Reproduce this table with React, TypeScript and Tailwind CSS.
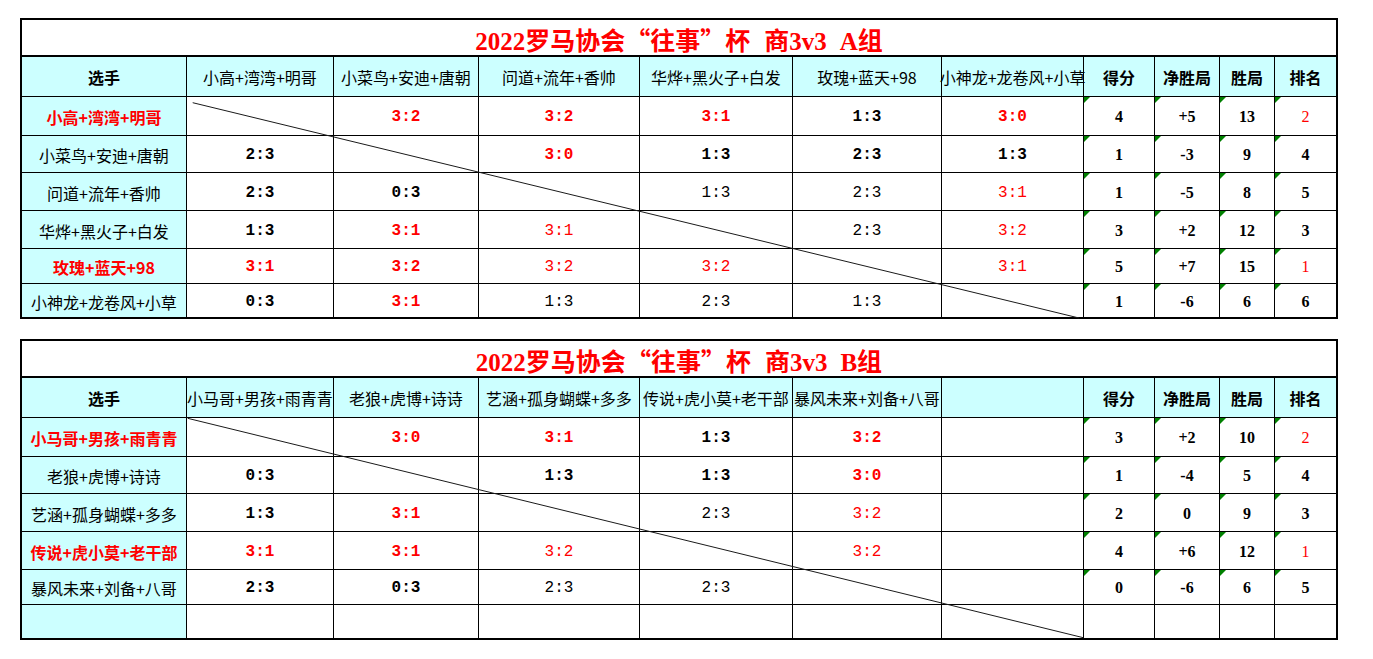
import React from "react";

type Score = { t: string; r?: boolean };
type Row = {
  name: string;
  red?: boolean;
  scores: Score[];
  stats: string[];
  rankRed?: boolean;
};

const GRID =
  "grid grid-cols-[165px_147px_145px_161px_153px_149px_142px_71px_65px_55px_61px]";
const ROW_H = ["h-[39px]", "h-[37px]", "h-[38px]", "h-[38px]", "h-[35px]", "h-[33px]"];

const CJK = "font-['Noto_Sans_CJK_SC',sans-serif]";
const MONO = "font-['Liberation_Mono','Noto_Sans_CJK_SC',monospace]";
const SERIF = "font-['Liberation_Serif','Noto_Sans_CJK_SC',serif]";

const s = (t: string, r?: boolean): Score => ({ t, r });

const tableA: { group: string; headers: string[]; rows: Row[]; line: [number, number, number, number] } = {
  group: "A",
  headers: [
    "小高+湾湾+明哥",
    "小菜鸟+安迪+唐朝",
    "问道+流年+香帅",
    "华烨+黑火子+白发",
    "玫瑰+蓝天+98",
    "小神龙+龙卷风+小草",
  ],
  rows: [
    { name: "小高+湾湾+明哥", red: true, scores: [s(""), s("3:2", true), s("3:2", true), s("3:1", true), s("1:3"), s("3:0", true)], stats: ["4", "+5", "13", "2"], rankRed: true },
    { name: "小菜鸟+安迪+唐朝", scores: [s("2:3"), s(""), s("3:0", true), s("1:3"), s("2:3"), s("1:3")], stats: ["1", "-3", "9", "4"] },
    { name: "问道+流年+香帅", scores: [s("2:3"), s("0:3"), s(""), s("1:3"), s("2:3"), s("3:1", true)], stats: ["1", "-5", "8", "5"] },
    { name: "华烨+黑火子+白发", scores: [s("1:3"), s("3:1", true), s("3:1", true), s(""), s("2:3"), s("3:2", true)], stats: ["3", "+2", "12", "3"] },
    { name: "玫瑰+蓝天+98", red: true, scores: [s("3:1", true), s("3:2", true), s("3:2", true), s("3:2", true), s(""), s("3:1", true)], stats: ["5", "+7", "15", "1"], rankRed: true },
    { name: "小神龙+龙卷风+小草", scores: [s("0:3"), s("3:1", true), s("1:3"), s("2:3"), s("1:3"), s("")], stats: ["1", "-6", "6", "6"] },
  ],
  line: [170.7, 82.7, 1057, 298],
};

const tableB: typeof tableA = {
  group: "B",
  headers: [
    "小马哥+男孩+雨青青",
    "老狼+虎博+诗诗",
    "艺涵+孤身蝴蝶+多多",
    "传说+虎小莫+老干部",
    "暴风未来+刘备+八哥",
    "",
  ],
  rows: [
    { name: "小马哥+男孩+雨青青", red: true, scores: [s(""), s("3:0", true), s("3:1", true), s("1:3"), s("3:2", true), s("")], stats: ["3", "+2", "10", "2"], rankRed: true },
    { name: "老狼+虎博+诗诗", scores: [s("0:3"), s(""), s("1:3"), s("1:3"), s("3:0", true), s("")], stats: ["1", "-4", "5", "4"] },
    { name: "艺涵+孤身蝴蝶+多多", scores: [s("1:3"), s("3:1", true), s(""), s("2:3"), s("3:2", true), s("")], stats: ["2", "0", "9", "3"] },
    { name: "传说+虎小莫+老干部", red: true, scores: [s("3:1", true), s("3:1", true), s("3:2", true), s(""), s("3:2", true), s("")], stats: ["4", "+6", "12", "1"], rankRed: true },
    { name: "暴风未来+刘备+八哥", scores: [s("2:3"), s("0:3"), s("2:3"), s("2:3"), s(""), s("")], stats: ["0", "-6", "6", "5"] },
    { name: "", scores: [s(""), s(""), s(""), s(""), s(""), s("")], stats: ["", "", "", ""] },
  ],
  line: [165.7, 77.3, 1061.3, 296.7],
};

function Title({ group }: { group: string }) {
  return (
    <div className="h-[37px] border-b-2 border-black flex items-center justify-center pt-[6px]">
      <div className={`flex items-baseline text-[#ff0000] text-[25px] leading-none font-bold whitespace-nowrap ${SERIF}`}>
        <span>2022</span>
        <span className={CJK}>罗马协会</span>
        <span className={`${CJK} inline-block w-[25px] text-right`}>“</span>
        <span className={CJK}>往事</span>
        <span className={`${CJK} inline-block w-[25px] text-left`}>”</span>
        <span className={CJK}>杯</span>
        <span className="inline-block w-[14px]"> </span>
        <span className={CJK}>商</span>
        <span>3v3</span>
        <span className="inline-block w-[13px]"> </span>
        <span>{group}</span>
        <span className={CJK}>组</span>
      </div>
    </div>
  );
}

function Tri() {
  return (
    <div className="absolute left-0 top-0 w-0 h-0 border-t-[6px] border-t-[#008000] border-r-[6px] border-r-transparent" />
  );
}

function Table({ data }: { data: typeof tableA }) {
  const [x1, y1, x2, y2] = data.line;
  return (
    <div className="relative ml-[20px] w-[1318px] border-2 border-black bg-white">
      <Title group={data.group} />
      <div className={`${GRID} h-[40px] border-b border-black bg-[#ccffff] text-black text-[16px] leading-none`}>
        <div className={`flex items-center justify-center pt-[1px] border-r border-black font-bold ${CJK}`}>选手</div>
        {data.headers.map((h, i) => (
          <div key={i} className={`flex items-center justify-center pt-[1px] border-r border-black whitespace-nowrap overflow-visible ${CJK}`}>
            {h}
          </div>
        ))}
        <div className={`flex items-center justify-center pt-[1px] border-r border-black font-bold ${CJK}`}>得分</div>
        <div className={`flex items-center justify-center pt-[1px] border-r border-black font-bold ${CJK}`}>净胜局</div>
        <div className={`flex items-center justify-center pt-[1px] border-r border-black font-bold ${CJK}`}>胜局</div>
        <div className={`flex items-center justify-center pt-[1px] font-bold ${CJK}`}>排名</div>
      </div>
      {data.rows.map((row, ri) => (
        <div
          key={ri}
          className={`${GRID} ${ROW_H[ri]} ${ri < 5 ? "border-b border-black" : ""} text-[16px] leading-none`}
        >
          <div
            className={`flex items-center justify-center pt-[2px] border-r border-black bg-[#ccffff] whitespace-nowrap ${CJK} ${
              row.red ? "text-[#ff0000] font-bold" : "text-black"
            }`}
          >
            {row.name}
          </div>
          {row.scores.map((sc, ci) => (
            <div
              key={ci}
              className={`flex items-center justify-center pt-[2px] border-r border-black text-[16px] ${MONO} ${
                sc.r ? "text-[#ff0000]" : "text-black"
              } ${ci < 2 || ri < 2 ? "font-bold" : "font-normal"}`}
            >
              {sc.t}
            </div>
          ))}
          {row.stats.map((st, si) => {
            const isRank = si === 3;
            const red = isRank && row.rankRed;
            return (
              <div
                key={si}
                className={`relative flex items-center justify-center pt-[2px] ${si < 3 ? "border-r border-black" : ""} text-[16px] ${SERIF} ${
                  red ? "text-[#ff0000] font-normal" : "text-black font-bold"
                }`}
              >
                {st !== "" && <Tri />}
                {st}
              </div>
            );
          })}
        </div>
      ))}
      <svg
        className="absolute left-0 top-0 pointer-events-none overflow-visible"
        width={1314}
        height={297}
      >
        <line x1={x1} y1={y1} x2={x2} y2={y2} stroke="#1a1a1a" strokeWidth={1} />
      </svg>
    </div>
  );
}

export default function App() {
  return (
    <div className="w-[1373px] h-[659px] bg-white overflow-hidden pt-[18px]">
      <Table data={tableA} />
      <div className="h-[20px]" />
      <Table data={tableB} />
    </div>
  );
}
